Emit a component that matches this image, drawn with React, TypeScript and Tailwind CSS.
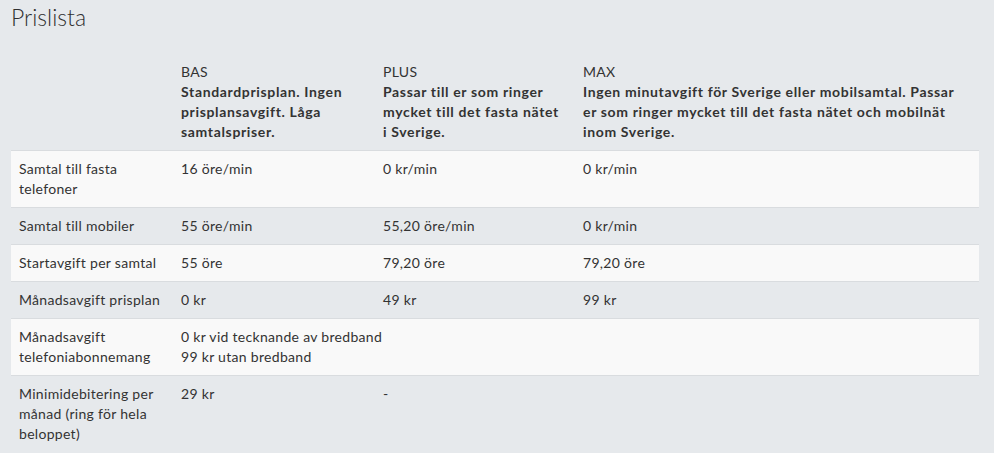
import React from "react";

const rows: { label: string; cells: (string | string[])[]; white: boolean }[] = [
  { label: "Samtal till fasta telefoner", cells: ["16 öre/min", "0 kr/min", "0 kr/min"], white: true },
  { label: "Samtal till mobiler", cells: ["55 öre/min", "55,20 öre/min", "0 kr/min"], white: false },
  { label: "Startavgift per samtal", cells: ["55 öre", "79,20 öre", "79,20 öre"], white: true },
  { label: "Månadsavgift prisplan", cells: ["0 kr", "49 kr", "99 kr"], white: false },
];

export default function App() {
  return (
    <div
      className="w-[994px] h-[453px] overflow-hidden bg-[#e6e9ec] text-[#333333]"
      style={{ fontFamily: "Lato, 'Open Sans', sans-serif" }}
    >
      <h1 className="pl-[11px] pt-[3px] text-[23px] leading-[28px] font-light text-[#2f2f2f]">Prislista</h1>
      <div className="px-[11px] pt-[23px]">
        <table className="w-[968px] border-collapse table-fixed text-[14px] leading-[20px] tracking-[0.3px]">
          <colgroup>
            <col className="w-[162px]" />
            <col className="w-[202px]" />
            <col className="w-[200px]" />
            <col className="w-[404px]" />
          </colgroup>
          <thead>
            <tr className="border-b border-[#d9dcdf] align-top">
              <th className="px-2 py-2"></th>
              <th className="px-2 py-2 text-left font-normal">
                <div>BAS</div>
                <div className="font-bold tracking-[0.65px]">Standardprisplan. Ingen prisplansavgift. Låga samtalspriser.</div>
              </th>
              <th className="px-2 py-2 text-left font-normal">
                <div>PLUS</div>
                <div className="font-bold tracking-[0.65px]">Passar till er som ringer mycket till det fasta nätet i Sverige.</div>
              </th>
              <th className="px-2 py-2 text-left font-normal">
                <div>MAX</div>
                <div className="font-bold tracking-[0.65px]">
                  Ingen minutavgift för Sverige eller mobilsamtal. Passar er som ringer mycket till det fasta nätet och mobilnät inom Sverige.
                </div>
              </th>
            </tr>
          </thead>
          <tbody>
            {rows.map((r, i) => (
              <tr
                key={i}
                className={`align-top border-b border-[#d9dcdf] ${r.white ? "bg-[#f9f9f9]" : "bg-[#e6e9ec]"}`}
              >
                <td className="px-2 py-2">{r.label}</td>
                {r.cells.map((c, j) => (
                  <td key={j} className="px-2 py-2">
                    {c}
                  </td>
                ))}
              </tr>
            ))}
            <tr className="align-top border-b border-[#d9dcdf] bg-[#f9f9f9]">
              <td className="px-2 py-2">Månadsavgift telefoniabonnemang</td>
              <td className="px-2 py-2 whitespace-nowrap">
                <div>0 kr vid tecknande av bredband</div>
                <div>99 kr utan bredband</div>
              </td>
              <td className="px-2 py-2"></td>
              <td className="px-2 py-2"></td>
            </tr>
            <tr className="align-top">
              <td className="px-2 py-2">Minimidebitering per månad (ring för hela beloppet)</td>
              <td className="px-2 py-2">29 kr</td>
              <td className="px-2 py-2">-</td>
              <td className="px-2 py-2"></td>
            </tr>
          </tbody>
        </table>
      </div>
    </div>
  );
}
